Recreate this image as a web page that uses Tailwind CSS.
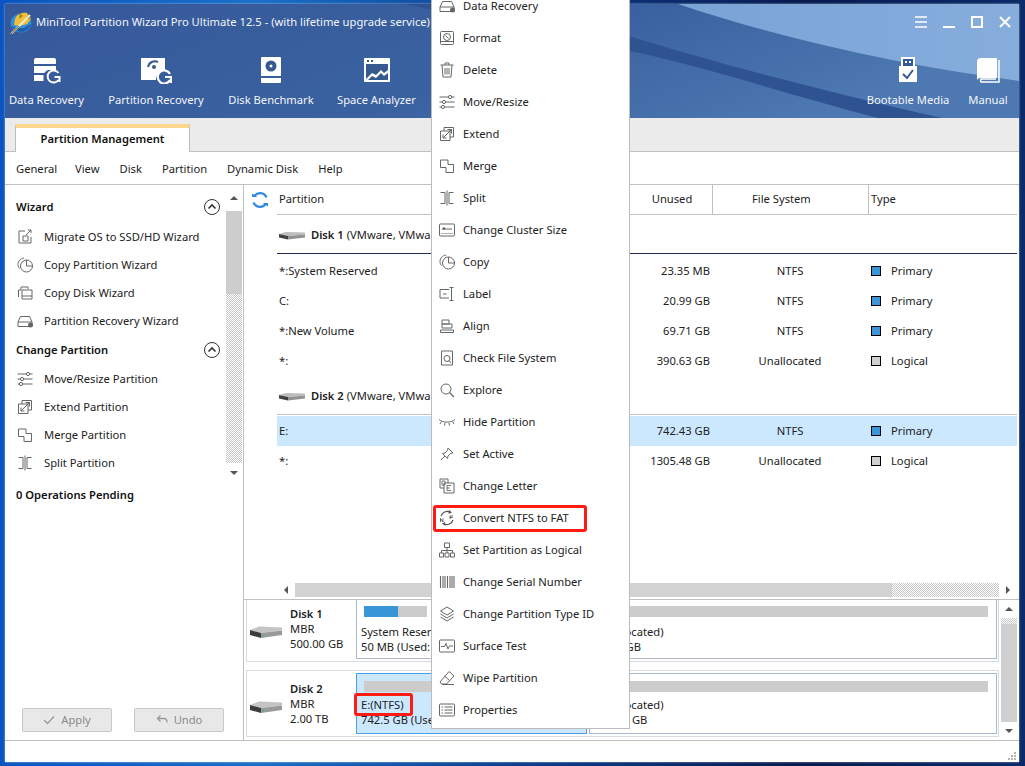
<!DOCTYPE html>
<html lang="en">
<head>
<meta charset="UTF-8">
<title>MiniTool Partition Wizard</title>
<script src="https://cdn.jsdelivr.net/npm/@tailwindcss/browser@4"></script>
</head>
<body class="w-[1025px] h-[766px] overflow-hidden relative bg-[linear-gradient(90deg,#0a55c0_0%,#1a6fc8_25%,#0d3f90_50%,#071a50_78%,#0a2a6a_100%)] font-['Noto_Sans','Open_Sans',sans-serif] text-[11.2px] text-[#222]">

<!-- shared icons -->
<svg class="hidden">
  <symbol id="i-recovery" viewBox="0 0 18 18"><path d="M2 10 4.500 4.500H13.500L16 10V14.500H2ZM2 10H16" fill="none" stroke="#666"/><circle cx="14.500" cy="13" r="2.500" fill="#666"/></symbol>
  <symbol id="i-sliders" viewBox="0 0 18 18"><path d="M1.500 4H16.500M1.500 9H16.500M1.500 14H16.500" stroke="#666" fill="none"/><circle cx="12" cy="4" r="1.600" fill="#fff" stroke="#666"/><circle cx="6" cy="9" r="1.600" fill="#fff" stroke="#666"/><circle cx="5" cy="14" r="1.600" fill="#fff" stroke="#666"/></symbol>
  <symbol id="i-extend" viewBox="0 0 18 18"><path d="M6 6V2.500H15.500V12H12M2.500 6H12V15.500H2.500ZM5 13 13.500 4.500M9.500 4.500H13.500V8.500M5 9.500V13H8.500" fill="none" stroke="#666"/></symbol>
  <symbol id="i-merge" viewBox="0 0 18 18"><path d="M2.500 3H10V7.500H15.500V15.500H8V10.500H2.500Z" fill="none" stroke="#666"/></symbol>
  <symbol id="i-split" viewBox="0 0 18 18"><path d="M2.500 3.500H7V14.500H2.500M15.500 3.500H11V14.500H15.500M9 1.500V16.500" fill="none" stroke="#666"/></symbol>
  <symbol id="i-copy" viewBox="0 0 18 18"><circle cx="10.500" cy="10" r="6" fill="none" stroke="#666"/><path d="M10.500 4V10H16.500" fill="none" stroke="#666"/><path d="M8 2C4.500 2.500 2 5 2 8.500 2 10 2.500 11.500 3.500 12.500" fill="none" stroke="#666"/></symbol>
  <symbol id="i-disk" viewBox="0 0 32 14"><path d="M0 5 9 1.500 32 2.500 32 5.500 11 8Z" fill="#c4c4c4"/><path d="M0 5 11 8V13L0 10Z" fill="#3c3c3c"/><path d="M11 8 32 5.500V10L11 13Z" fill="#9a9a9a"/><circle cx="13" cy="10.500" r="0.900" fill="#35c05a"/></symbol>
  <symbol id="i-hdd-small" viewBox="0 0 26 9"><path d="M0 3 7 1 26 1.500 26 3.500 9 5Z" fill="#bdbdbd"/><path d="M0 3 9 5V8.500L0 6.500Z" fill="#404040"/><path d="M9 5 26 3.500V6.500L9 8.500Z" fill="#929292"/></symbol>
  <symbol id="i-chevron" viewBox="0 0 18 18"><circle cx="9" cy="9" r="7.500" fill="none" stroke="#333"/><path d="M5.500 10.500 9 7 12.500 10.500" fill="none" stroke="#333" stroke-width="1.600"/></symbol>
  <symbol id="i-format" viewBox="0 0 18 18"><rect x="2.500" y="2.500" width="13" height="13" rx="1" fill="none" stroke="#666"/><circle cx="9" cy="8" r="3.500" fill="none" stroke="#666"/><path d="M7.500 6.500 10.500 9.500M3 12.500H15" stroke="#666" fill="none"/></symbol>
  <symbol id="i-delete" viewBox="0 0 18 18"><path d="M2.500 4H15.500M7 4V2H11V4M4 4 5 16H13L14 4M7 7V13.500M9 7V13.500M11 7V13.500" fill="none" stroke="#666"/></symbol>
  <symbol id="i-cluster" viewBox="0 0 18 18"><rect x="1.500" y="3" width="15" height="12" rx="1" fill="none" stroke="#666"/><path d="M4 8H14" stroke="#666"/><circle cx="6" cy="7.500" r="1.300" fill="#666"/><path d="M3.500 12.500H14.500" stroke="#666" stroke-dasharray="1 1"/></symbol>
  <symbol id="i-label" viewBox="0 0 18 18"><path d="M11 4.500H2V13H11M5 9H8.500M11.500 2.500H15.500M13.500 2.500V15.500M11.500 15.500H15.500" fill="none" stroke="#666"/></symbol>
  <symbol id="i-align" viewBox="0 0 18 18"><path d="M4 3H11V7H4ZM4 7H14V11H4ZM2.500 13H15.500V15.500H2.500Z" fill="none" stroke="#666"/></symbol>
  <symbol id="i-check" viewBox="0 0 18 18"><path d="M3.500 2H14.500V16H3.500Z" fill="none" stroke="#666"/><circle cx="9" cy="9.500" r="3" fill="none" stroke="#666"/><path d="M11 11.500 13 14" stroke="#666"/></symbol>
  <symbol id="i-explore" viewBox="0 0 18 18"><circle cx="8" cy="8" r="5" fill="none" stroke="#666"/><path d="M11.500 11.500 16 16" stroke="#666" stroke-width="1.300"/></symbol>
  <symbol id="i-hide" viewBox="0 0 18 18"><path d="M1 6.500C5 10 13 10 17 6.500M3.500 8.500 2 11M7 10 6.500 12.500M11 10 11.500 12.500M14.500 8.500 16 11" fill="none" stroke="#666"/></symbol>
  <symbol id="i-pin" viewBox="0 0 18 18"><path d="M10 3 15 8 12.500 8.500 10 11 9.500 13.500 4.500 8.500 7 8 9.500 5.500ZM7 11 3 15" fill="none" stroke="#666"/></symbol>
  <symbol id="i-letter" viewBox="0 0 18 18"><path d="M2 2H10V6M6 11H2V2M6 6H16V16H6Z" fill="none" stroke="#666"/><path d="M4 4H7V8H4ZM9 8.500H13M9 11H12M9 13.500H13M9 8.500V13.500" fill="none" stroke="#666" stroke-width="0.900"/></symbol>
  <symbol id="i-convert" viewBox="0 0 18 18"><path d="M3 7A6.500 6.500 0 0 1 12 3M15 11A6.500 6.500 0 0 1 6 15" fill="none" stroke="#555" stroke-width="1.200"/><path d="M11 1 14 3.500 10.500 5ZM7 13 4 14.500 7.500 17Z" fill="#555"/><path d="M12 7V10M12 7H15M12 8.500H14.500M2.500 13V9.500L5 13V9.500" fill="none" stroke="#555" stroke-width="0.900"/></symbol>
  <symbol id="i-logical" viewBox="0 0 18 18"><path d="M6.500 2H11.500V6.500H6.500ZM9 6.500V9.500M3.500 12V9.500H14.500V12M9 9.500V12M1.500 12H5.500V16H1.500ZM7 12H11V16H7ZM12.500 12H16.500V16H12.500Z" fill="none" stroke="#666"/></symbol>
  <symbol id="i-serial" viewBox="0 0 18 18"><path d="M2.500 3V15M5 3V15M7 3V15M9.500 3V15M12 3V15M14 3V15M16 3V15" stroke="#666" stroke-width="1.100"/></symbol>
  <symbol id="i-layers" viewBox="0 0 18 18"><path d="M9 2 15.500 6 9 10 2.500 6ZM2.500 9 9 13 15.500 9M2.500 12 9 16 15.500 12" fill="none" stroke="#666"/></symbol>
  <symbol id="i-surface" viewBox="0 0 18 18"><rect x="1.500" y="3" width="15" height="12" rx="1" fill="none" stroke="#666"/><path d="M3 9.500H6.500L8 6.500 10 12 11.500 9H15" fill="none" stroke="#666"/></symbol>
  <symbol id="i-wipe" viewBox="0 0 18 18"><path d="M11 2.500 16 7 8.500 15H3.500L2 13ZM6.500 7 11.500 11.500M4 15.500H16" fill="none" stroke="#666"/></symbol>
  <symbol id="i-props" viewBox="0 0 18 18"><rect x="1.500" y="3" width="15" height="12" rx="1" fill="none" stroke="#666"/><path d="M3.500 6H5M3.500 9H5M3.500 12H5M6.500 6H14.500M6.500 9H14.500M6.500 12H14.500" stroke="#666"/></symbol>
</svg>

<!-- app window -->
<div class="absolute left-[5px] top-[4px] w-[1014px] h-[758px] bg-white flex flex-col overflow-hidden shadow-[0_0_2px_rgba(255,255,255,0.6)]">

  <!-- header -->
  <div class="relative h-[114px] shrink-0 text-[#f2f5fa]">
    <svg class="absolute inset-0" width="1014" height="114" viewBox="0 0 1014 114">
      <defs>
        <linearGradient id="hl" x1="0" y1="0" x2="1" y2="0.300"><stop offset="0" stop-color="#36589a"/><stop offset="0.600" stop-color="#3a62a0"/><stop offset="1" stop-color="#4d78b1"/></linearGradient>
        <linearGradient id="hs" x1="0" y1="0" x2="1" y2="0"><stop offset="0" stop-color="#7aa3d6"/><stop offset="1" stop-color="#86addc"/></linearGradient>
      </defs>
      <rect width="1014" height="114" fill="url(#hl)"/>
      <path d="M673 0C780 36 900 62 1014 77V0Z" fill="url(#hs)"/>
      <path d="M400 -20C520 10 620 31 620 31 720 62 840 92 937 114H873C780 90 700 62 620 46 540 30 470 15 400 0Z" fill="#2f5290"/>
    </svg>
    <div class="relative flex items-center h-[36px]">
      <svg class="ml-[5px] w-[22px] h-[24px]" viewBox="0 0 22 24">
        <ellipse cx="11" cy="13" rx="10.500" ry="9.500" fill="#2f8fd8"/>
        <path d="M1 16C3 18 6 21 11 22 16 22 20 18 21 14L14 18 7 18Z" fill="#1d5fae"/>
        <path d="M5 9C7 4 12 2 17 3L21 9 17 14 10 16 4 15Z" fill="#efc23a"/>
        <path d="M10 3 13 6 9 9ZM16 7 19 5 20 10Z" fill="#a9822a"/>
        <path d="M1 24 20 5" stroke="#efe9d2" stroke-width="2"/>
        <path d="M1 24 9 16" stroke="#8a7a55" stroke-width="1.200"/>
      </svg>
      <span class="ml-[4px] whitespace-nowrap">MiniTool Partition Wizard Pro Ultimate 12.5 - (with lifetime upgrade service)</span>
      <div class="ml-auto flex items-center gap-[16px] pr-[8px]">
        <svg class="w-[12px] h-[12px]" viewBox="0 0 12 12"><path d="M0 1H12M0 6H12M0 11H12" stroke="#fff" stroke-width="1.500"/></svg>
        <svg class="w-[12px] h-[12px]" viewBox="0 0 12 12"><path d="M0 11H12" stroke="#fff" stroke-width="2"/></svg>
        <svg class="w-[12px] h-[12px]" viewBox="0 0 12 12"><rect x="1" y="1" width="10" height="10" fill="none" stroke="#fff" stroke-width="2"/></svg>
        <svg class="w-[12px] h-[12px]" viewBox="0 0 12 12"><path d="M1 1 11 11M11 1 1 11" stroke="#fff" stroke-width="2"/></svg>
      </div>
    </div>
    <div class="relative flex pt-[16px]">
      <div class="w-[83px] flex flex-col items-center">
        <svg class="w-[28px] h-[28px]" viewBox="0 0 28 28"><path d="M3 2H21A2 2 0 0 1 23 4V8H1V4A2 2 0 0 1 3 2ZM1 10H23V14H15C13 15 12 16 11.500 17H1ZM1 19H10.500V25H1Z" fill="#fff"/><path d="M25.500 17A6 6 0 1 0 25.500 24M21.500 21H26.500V26" fill="none" stroke="#fff" stroke-width="2"/></svg>
        <span class="mt-[8px] leading-[16px] whitespace-nowrap">Data Recovery</span>
      </div>
      <div class="w-[136px] flex flex-col items-center">
        <svg class="w-[32px] h-[28px]" viewBox="0 0 32 28"><path d="M1 2H25V14C20 14 16 18 16 24H1Z" fill="#fff"/><path d="M8 11A7 7 0 0 1 18 6" fill="none" stroke="#36598f" stroke-width="2"/><circle cx="14" cy="11" r="2" fill="#36598f"/><path d="M30 18A6.500 6.500 0 1 0 30 24M25 21H31V27" fill="none" stroke="#fff" stroke-width="2.200"/></svg>
        <span class="mt-[8px] leading-[16px] whitespace-nowrap">Partition Recovery</span>
      </div>
      <div class="w-[94px] flex flex-col items-center">
        <svg class="w-[22px] h-[28px]" viewBox="0 0 22 28"><path d="M2 1H20A1 1 0 0 1 21 2V20H1V2A1 1 0 0 1 2 1ZM1 22H21V26A1 1 0 0 1 20 27H2A1 1 0 0 1 1 26Z" fill="#fff"/><circle cx="11" cy="10" r="5.500" fill="#36598f"/><circle cx="11" cy="10" r="1.500" fill="#fff"/></svg>
        <span class="mt-[8px] leading-[16px] whitespace-nowrap">Disk Benchmark</span>
      </div>
      <div class="w-[117px] flex flex-col items-center">
        <svg class="w-[28px] h-[28px]" viewBox="0 0 28 28"><rect x="1" y="2" width="26" height="24" rx="1" fill="#fff"/><path d="M4 5H6M8 5H10" stroke="#36598f" stroke-width="2"/><rect x="3" y="8" width="22" height="16" fill="#36598f"/><path d="M3 23 9 17 13 19 18 14 21 17 25 14V17L21 20 18 17 13 22 9 20 5 24H3Z" fill="#fff"/></svg>
        <span class="mt-[8px] leading-[16px] whitespace-nowrap">Space Analyzer</span>
      </div>
      <div class="ml-auto w-[100px] flex flex-col items-center">
        <svg class="w-[20px] h-[28px]" viewBox="0 0 20 28"><path d="M3 1H17V10H19V26H1V10H3Z" fill="#fff"/><rect x="5" y="3" width="10" height="7" fill="#36598f"/><path d="M7 5H9V7H7ZM11 5H13V7H11Z" fill="#fff"/><path d="M5 18 9 22 15 14" fill="none" stroke="#36598f" stroke-width="2"/></svg>
        <span class="mt-[8px] leading-[16px] whitespace-nowrap">Bootable Media</span>
      </div>
      <div class="w-[60px] mr-[1px] flex flex-col items-center">
        <svg class="w-[24px] h-[28px]" viewBox="0 0 24 28"><path d="M5 2H21V22H5A4 4 0 0 0 1 24V6A4 4 0 0 1 5 2Z" fill="#fff"/><path d="M23 4V26H5A3 3 0 0 1 5 23H20" fill="none" stroke="#fff" stroke-width="1.500"/></svg>
        <span class="mt-[8px] leading-[16px] whitespace-nowrap">Manual</span>
      </div>
    </div>
  </div>

  <!-- tab strip -->
  <div class="h-[33px] shrink-0 bg-[#ebebeb] pl-[10px] pt-[6px] relative z-10">
    <div class="w-[175px] h-[28px] bg-white border-x border-[#bdbdbd] border-t-[4px] border-t-[#fdd78f] text-center font-semibold text-[#111] leading-[21px]">Partition Management</div>
  </div>

  <!-- menu bar -->
  <div class="h-[34px] shrink-0 border-t border-b border-[#c0c0c0] flex items-center pt-[2px] pl-[11px] gap-[20px]">
    <span class="w-[39px] whitespace-nowrap">General</span><span>View</span><span>Disk</span><span>Partition</span><span>Dynamic Disk</span><span>Help</span>
  </div>

  <!-- main area -->
  <div class="h-[556px] shrink-0 flex">

    <!-- left panel -->
    <div class="w-[239px] shrink-0 border-r border-b border-[#c0c0c0] flex flex-col">
      <div class="h-[298px] flex shrink-0">
        <div class="w-[221px] pt-[8px] pl-[11px] pr-[5px]">
          <div class="h-[28px] flex items-center justify-between font-semibold text-[#111]"><span>Wizard</span><svg class="w-[18px] h-[18px]"><use href="#i-chevron"/></svg></div>
          <div class="mt-[2px] h-[28px] flex items-center gap-[10px]"><svg class="w-[18px] h-[18px]" viewBox="0 0 18 18"><path d="M9 3H3V15H15V9M7 8H12V13H7ZM10 7 15 2M12 2H15V5" fill="none" stroke="#666"/></svg><span>Migrate OS to SSD/HD Wizard</span></div>
          <div class="h-[28px] flex items-center gap-[10px]"><svg class="w-[18px] h-[18px]"><use href="#i-copy"/></svg><span>Copy Partition Wizard</span></div>
          <div class="h-[28px] flex items-center gap-[10px]"><svg class="w-[18px] h-[18px]" viewBox="0 0 18 18"><path d="M5 6V3H12V5M2.500 13V6H5M6 6H16V15H6ZM6 12H16" fill="none" stroke="#666"/></svg><span>Copy Disk Wizard</span></div>
          <div class="h-[28px] flex items-center gap-[10px]"><svg class="w-[18px] h-[18px]"><use href="#i-recovery"/></svg><span>Partition Recovery Wizard</span></div>
          <div class="mt-[1px] h-[28px] flex items-center justify-between font-semibold text-[#111]"><span>Change Partition</span><svg class="w-[18px] h-[18px]"><use href="#i-chevron"/></svg></div>
          <div class="mt-[1px] h-[28px] flex items-center gap-[10px]"><svg class="w-[18px] h-[18px]"><use href="#i-sliders"/></svg><span>Move/Resize Partition</span></div>
          <div class="h-[28px] flex items-center gap-[10px]"><svg class="w-[18px] h-[18px]"><use href="#i-extend"/></svg><span>Extend Partition</span></div>
          <div class="h-[28px] flex items-center gap-[10px]"><svg class="w-[18px] h-[18px]"><use href="#i-merge"/></svg><span>Merge Partition</span></div>
          <div class="h-[28px] flex items-center gap-[10px]"><svg class="w-[18px] h-[18px]"><use href="#i-split"/></svg><span>Split Partition</span></div>
        </div>
        <!-- scrollbar -->
        <div class="w-[16px] flex flex-col items-center">
          <div class="h-[26px] flex items-center justify-center"><div class="w-0 h-0 border-x-[4px] border-x-transparent border-b-[4px] border-b-[#555]"></div></div>
          <div class="w-full h-[83px] bg-[#cdcdcd]"></div>
          <div class="w-full flex-1 bg-[repeating-conic-gradient(#c8c8c8_0_25%,#fff_0_50%)] bg-[length:2px_2px]"></div>
          <div class="h-[20px] flex items-center justify-center"><div class="w-0 h-0 border-x-[4px] border-x-transparent border-t-[4px] border-t-[#555]"></div></div>
        </div>
      </div>
      <div class="h-[24px] shrink-0 pl-[11px] flex items-center font-semibold text-[#111]">0 Operations Pending</div>
      <div class="mt-auto mb-[8px] pl-[17px] flex gap-[22px]">
        <div class="w-[90px] h-[24px] border border-[#c8c8c8] rounded-[2px] bg-[#e8e8e8] text-[#8a8a8a] flex items-center justify-center gap-[6px]">
          <svg class="w-[12px] h-[12px]" viewBox="0 0 12 12"><path d="M1 6 4.500 9.500 11 2.500" fill="none" stroke="#9a9a9a" stroke-width="1.300"/></svg><span>Apply</span>
        </div>
        <div class="w-[90px] h-[24px] border border-[#c8c8c8] rounded-[2px] bg-[#e8e8e8] text-[#8a8a8a] flex items-center justify-center gap-[6px]">
          <svg class="w-[12px] h-[12px]" viewBox="0 0 12 12"><path d="M4.500 1.500 1.500 4.500 4.500 7.500M1.500 4.500H8C10 4.500 11 6 11 8.500" fill="none" stroke="#9a9a9a" stroke-width="1.300"/></svg><span>Undo</span>
        </div>
      </div>
    </div>

    <!-- right panel -->
    <div class="flex-1 flex flex-col min-w-0 border-b border-[#c0c0c0]">

      <!-- partition table -->
      <div class="h-[415px] shrink-0 border-b border-[#c0c0c0] flex flex-col">
        <div class="flex h-[30px] shrink-0">
          <div class="w-[33px] flex items-center pl-[7px]">
            <svg class="w-[18px] h-[18px]" viewBox="0 0 18 18"><path d="M15.500 6.500A7 7 0 0 0 3 5.500M2.500 11.500A7 7 0 0 0 15 12.500" fill="none" stroke="#2b8ae0" stroke-width="2.200"/><path d="M1 2.500 6.500 6H1ZM17 15.500 11.500 12H17Z" fill="#2b8ae0"/></svg>
          </div>
          <div class="w-[740px] border-b border-[#c0c0c0] grid grid-cols-[355px_80px_156px_149px] items-center">
            <span class="pl-[2px]">Partition</span>
            <span class="text-center">Unused</span>
            <span class="border-l border-[#c0c0c0] h-full flex items-center pl-[39px]">File System</span>
            <span class="border-l border-[#c0c0c0] h-full flex items-center pl-[2px]">Type</span>
          </div>
        </div>
        <div class="ml-[33px] w-[740px]">
          <div class="h-[39px] flex items-center gap-[6px] border-b border-[#1d2b55] pl-[2px] pt-[2px]">
            <svg class="w-[26px] h-[9px]"><use href="#i-hdd-small"/></svg>
            <span class="whitespace-nowrap"><b class="font-semibold">Disk 1</b> (VMware, VMwa</span>
          </div>
          <div class="h-[2px]"></div>
          <div class="h-[30px] grid grid-cols-[355px_80px_156px_149px] items-center"><span class="pl-[2px]">*:System Reserved</span><span class="text-right pr-[2px]">23.35 MB</span><span class="text-center">NTFS</span><span class="flex items-center gap-[10px] pl-[3px]"><i class="w-[10px] h-[10px] bg-[#3a96d8] border border-black"></i>Primary</span></div>
          <div class="h-[30px] grid grid-cols-[355px_80px_156px_149px] items-center"><span class="pl-[2px]">C:</span><span class="text-right pr-[2px]">20.99 GB</span><span class="text-center">NTFS</span><span class="flex items-center gap-[10px] pl-[3px]"><i class="w-[10px] h-[10px] bg-[#3a96d8] border border-black"></i>Primary</span></div>
          <div class="h-[30px] grid grid-cols-[355px_80px_156px_149px] items-center"><span class="pl-[2px]">*:New Volume</span><span class="text-right pr-[2px]">69.71 GB</span><span class="text-center">NTFS</span><span class="flex items-center gap-[10px] pl-[3px]"><i class="w-[10px] h-[10px] bg-[#3a96d8] border border-black"></i>Primary</span></div>
          <div class="h-[30px] grid grid-cols-[355px_80px_156px_149px] items-center"><span class="pl-[2px]">*:</span><span class="text-right pr-[2px]">390.63 GB</span><span class="text-center">Unallocated</span><span class="flex items-center gap-[10px] pl-[3px]"><i class="w-[10px] h-[10px] bg-[#d0d0d0] border border-black"></i>Logical</span></div>
          <div class="h-[39px] flex items-center gap-[6px] border-b border-[#c0c0c0] pl-[2px] pt-[2px]">
            <svg class="w-[26px] h-[9px]"><use href="#i-hdd-small"/></svg>
            <span class="whitespace-nowrap"><b class="font-semibold">Disk 2</b> (VMware, VMwa</span>
          </div>
          <div class="h-[1px]"></div>
          <div class="h-[30px] grid grid-cols-[355px_80px_156px_149px] items-center bg-[#cce8ff]"><span class="pl-[2px]">E:</span><span class="text-right pr-[2px]">742.43 GB</span><span class="text-center">NTFS</span><span class="flex items-center gap-[10px] pl-[3px]"><i class="w-[10px] h-[10px] bg-[#3a96d8] border border-black"></i>Primary</span></div>
          <div class="h-[30px] grid grid-cols-[355px_80px_156px_149px] items-center"><span class="pl-[2px]">*:</span><span class="text-right pr-[2px]">1305.48 GB</span><span class="text-center">Unallocated</span><span class="flex items-center gap-[10px] pl-[3px]"><i class="w-[10px] h-[10px] bg-[#d0d0d0] border border-black"></i>Logical</span></div>
        </div>
        <!-- horizontal scrollbar -->
        <div class="mt-auto mb-[2px] ml-[33px] w-[740px] h-[14px] flex">
          <div class="w-[18px] flex items-center justify-center"><div class="w-0 h-0 border-y-[4px] border-y-transparent border-r-[4px] border-r-[#555]"></div></div>
          <div class="w-[597px] bg-[#d2d2d2]"></div>
          <div class="w-[107px] bg-[repeating-conic-gradient(#c8c8c8_0_25%,#fff_0_50%)] bg-[length:2px_2px]"></div>
          <div class="w-[18px] flex items-center justify-center"><div class="w-0 h-0 border-y-[4px] border-y-transparent border-l-[4px] border-l-[#555]"></div></div>
        </div>
      </div>

      <!-- disk map -->
      <div class="h-[140px] flex">
        <div class="w-[757px] pl-[2px]">
          <!-- disk 1 -->
          <div class="w-[753px] h-[62px] border border-t-0 border-[#d4dbe3] flex">
            <div class="w-[109px] flex pl-[3px]">
              <svg class="w-[32px] h-[14px] mt-[25px]"><use href="#i-disk"/></svg>
              <div class="ml-[8px] pt-[6px] leading-[15px]"><b class="font-semibold block">Disk 1</b>MBR<br>500.00 GB</div>
            </div>
            <div class="w-[231px] h-[59px] border border-t-0 border-[#a9b8cb] pl-[4px] overflow-hidden whitespace-nowrap">
              <div class="ml-[3px] mt-[6px] w-[63px] h-[11px] bg-[#cccccc]"><div class="w-[34px] h-full bg-[#3896d6]"></div></div>
              <div class="mt-[7px] leading-[15px]">System Reserved<br>50 MB (Used: 46%)</div>
            </div>
            <div class="w-[408px] h-[59px] ml-[2px] border border-t-0 border-[#a9b8cb] pl-[4px] overflow-hidden whitespace-nowrap">
              <div class="ml-[3px] mt-[6px] w-[391px] h-[11px] bg-[#cccccc]"></div>
              <div class="mt-[7px] leading-[15px]">(Unallocated)<br>390.6 GB</div>
            </div>
          </div>
          <!-- disk 2 -->
          <div class="w-[753px] h-[67px] mt-[8px] border border-[#d4dbe3] flex">
            <div class="w-[109px] flex pl-[3px]">
              <svg class="w-[32px] h-[14px] mt-[29px]"><use href="#i-disk"/></svg>
              <div class="ml-[8px] pt-[10px] leading-[15px]"><b class="font-semibold block">Disk 2</b>MBR<br>2.00 TB</div>
            </div>
            <div class="w-[231px] h-[61px] mt-[2px] border border-[#4aa0e8] bg-[#cce8ff] pl-[4px] overflow-hidden whitespace-nowrap">
              <div class="ml-[3px] mt-[7px] w-[219px] h-[11px] bg-[#cccccc]"></div>
              <div class="mt-[5px] leading-[15px]">E:(NTFS)<br>742.5 GB (Used: 1%)</div>
            </div>
            <div class="w-[408px] h-[61px] mt-[2px] ml-[2px] border border-[#a9b8cb] pl-[4px] overflow-hidden whitespace-nowrap">
              <div class="ml-[3px] mt-[7px] w-[391px] h-[11px] bg-[#cccccc]"></div>
              <div class="mt-[5px] leading-[15px]">(Unallocated)<br>1305.5 GB</div>
            </div>
          </div>
        </div>
        <!-- vertical scrollbar -->
        <div class="w-[16px] flex flex-col">
          <div class="h-[18px] flex items-center justify-center"><div class="w-0 h-0 border-x-[4px] border-x-transparent border-b-[4px] border-b-[#555]"></div></div>
          <div class="h-[6px] bg-[repeating-conic-gradient(#c8c8c8_0_25%,#fff_0_50%)] bg-[length:2px_2px]"></div>
          <div class="h-[98px] bg-[#d0d0d0]"></div>
          <div class="h-[18px] flex items-center justify-center"><div class="w-0 h-0 border-x-[4px] border-x-transparent border-t-[4px] border-t-[#555]"></div></div>
        </div>
      </div>
    </div>
  </div>

  <!-- status bar -->
  <div class="flex-1 flex items-end justify-end pr-[3px] pb-[2px]">
    <svg class="w-[8px] h-[8px]" viewBox="0 0 8 8"><path d="M6 0H8V2H6ZM3 3H5V5H3ZM6 3H8V5H6ZM0 6H2V8H0ZM3 6H5V8H3ZM6 6H8V8H6Z" fill="#b5b5b5"/></svg>
  </div>
</div>

<!-- context menu -->
<div class="absolute z-20 left-[431px] top-[-11px] w-[199px] bg-white border border-[#bcbcbc] pb-[2px]">
  <div class="h-[32px] flex items-center pl-[6px] gap-[7px]"><svg class="w-[18px] h-[18px]"><use href="#i-recovery"/></svg>Data Recovery</div>
  <div class="h-[32px] flex items-center pl-[6px] gap-[7px]"><svg class="w-[18px] h-[18px]"><use href="#i-format"/></svg>Format</div>
  <div class="h-[32px] flex items-center pl-[6px] gap-[7px]"><svg class="w-[18px] h-[18px]"><use href="#i-delete"/></svg>Delete</div>
  <div class="h-[32px] flex items-center pl-[6px] gap-[7px]"><svg class="w-[18px] h-[18px]"><use href="#i-sliders"/></svg>Move/Resize</div>
  <div class="h-[32px] flex items-center pl-[6px] gap-[7px]"><svg class="w-[18px] h-[18px]"><use href="#i-extend"/></svg>Extend</div>
  <div class="h-[32px] flex items-center pl-[6px] gap-[7px]"><svg class="w-[18px] h-[18px]"><use href="#i-merge"/></svg>Merge</div>
  <div class="h-[32px] flex items-center pl-[6px] gap-[7px]"><svg class="w-[18px] h-[18px]"><use href="#i-split"/></svg>Split</div>
  <div class="h-[32px] flex items-center pl-[6px] gap-[7px]"><svg class="w-[18px] h-[18px]"><use href="#i-cluster"/></svg>Change Cluster Size</div>
  <div class="h-[32px] flex items-center pl-[6px] gap-[7px]"><svg class="w-[18px] h-[18px]"><use href="#i-copy"/></svg>Copy</div>
  <div class="h-[32px] flex items-center pl-[6px] gap-[7px]"><svg class="w-[18px] h-[18px]"><use href="#i-label"/></svg>Label</div>
  <div class="h-[32px] flex items-center pl-[6px] gap-[7px]"><svg class="w-[18px] h-[18px]"><use href="#i-align"/></svg>Align</div>
  <div class="h-[32px] flex items-center pl-[6px] gap-[7px]"><svg class="w-[18px] h-[18px]"><use href="#i-check"/></svg>Check File System</div>
  <div class="h-[32px] flex items-center pl-[6px] gap-[7px]"><svg class="w-[18px] h-[18px]"><use href="#i-explore"/></svg>Explore</div>
  <div class="h-[32px] flex items-center pl-[6px] gap-[7px]"><svg class="w-[18px] h-[18px]"><use href="#i-hide"/></svg>Hide Partition</div>
  <div class="h-[32px] flex items-center pl-[6px] gap-[7px]"><svg class="w-[18px] h-[18px]"><use href="#i-pin"/></svg>Set Active</div>
  <div class="h-[32px] flex items-center pl-[6px] gap-[7px]"><svg class="w-[18px] h-[18px]"><use href="#i-letter"/></svg>Change Letter</div>
  <div class="h-[32px] flex items-center pl-[6px] gap-[7px]"><svg class="w-[18px] h-[18px]"><use href="#i-convert"/></svg>Convert NTFS to FAT</div>
  <div class="h-[32px] flex items-center pl-[6px] gap-[7px]"><svg class="w-[18px] h-[18px]"><use href="#i-logical"/></svg>Set Partition as Logical</div>
  <div class="h-[32px] flex items-center pl-[6px] gap-[7px]"><svg class="w-[18px] h-[18px]"><use href="#i-serial"/></svg>Change Serial Number</div>
  <div class="h-[32px] flex items-center pl-[6px] gap-[7px]"><svg class="w-[18px] h-[18px]"><use href="#i-layers"/></svg>Change Partition Type ID</div>
  <div class="h-[32px] flex items-center pl-[6px] gap-[7px]"><svg class="w-[18px] h-[18px]"><use href="#i-surface"/></svg>Surface Test</div>
  <div class="h-[32px] flex items-center pl-[6px] gap-[7px]"><svg class="w-[18px] h-[18px]"><use href="#i-wipe"/></svg>Wipe Partition</div>
  <div class="h-[32px] flex items-center pl-[6px] gap-[7px]"><svg class="w-[18px] h-[18px]"><use href="#i-props"/></svg>Properties</div>
</div>

<!-- red annotation boxes -->
<div class="absolute z-30 left-[433px] top-[505px] w-[154px] h-[27px] border-[3px] border-[#ff1a12] rounded-[3px]"></div>
<div class="absolute z-30 left-[354px] top-[693px] w-[59px] h-[23px] border-[3px] border-[#ff1a12] rounded-[3px]"></div>

</body>
</html>
